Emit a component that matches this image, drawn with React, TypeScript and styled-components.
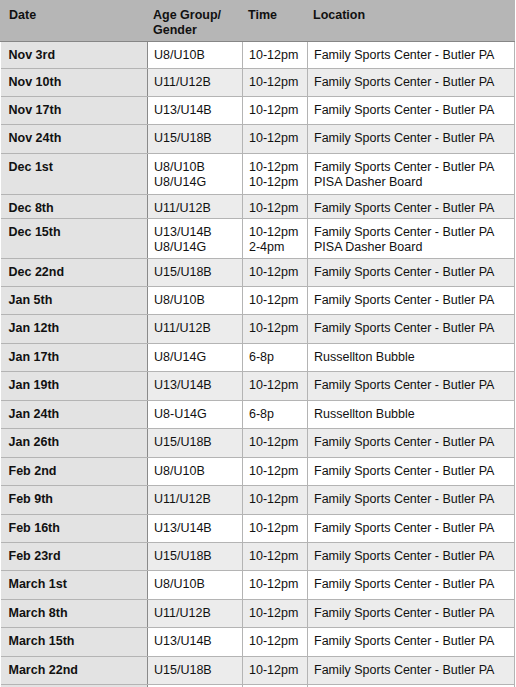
import React, { FC } from 'react';
import styled, { createGlobalStyle } from 'styled-components';

interface Game {
  date: string;
  ages: string[];
  times: string[];
  places: string[];
  height: number;
}

const FSC = 'Family Sports Center - Butler PA';

const games: Game[] = [
  { date: 'Nov 3rd', ages: ['U8/U10B'], times: ['10-12pm'], places: [FSC], height: 27 },
  { date: 'Nov 10th', ages: ['U11/U12B'], times: ['10-12pm'], places: [FSC], height: 28 },
  { date: 'Nov 17th', ages: ['U13/U14B'], times: ['10-12pm'], places: [FSC], height: 28 },
  { date: 'Nov 24th', ages: ['U15/U18B'], times: ['10-12pm'], places: [FSC], height: 29 },
  { date: 'Dec 1st', ages: ['U8/U10B', 'U8/U14G'], times: ['10-12pm', '10-12pm'], places: [FSC, 'PISA Dasher Board'], height: 41 },
  { date: 'Dec 8th', ages: ['U11/U12B'], times: ['10-12pm'], places: [FSC], height: 24 },
  { date: 'Dec 15th', ages: ['U13/U14B', 'U8/U14G'], times: ['10-12pm', '2-4pm'], places: [FSC, 'PISA Dasher Board'], height: 40 },
  { date: 'Dec 22nd', ages: ['U15/U18B'], times: ['10-12pm'], places: [FSC], height: 28 },
  { date: 'Jan 5th', ages: ['U8/U10B'], times: ['10-12pm'], places: [FSC], height: 28 },
  { date: 'Jan 12th', ages: ['U11/U12B'], times: ['10-12pm'], places: [FSC], height: 29 },
  { date: 'Jan 17th', ages: ['U8/U14G'], times: ['6-8p'], places: ['Russellton Bubble'], height: 28 },
  { date: 'Jan 19th', ages: ['U13/U14B'], times: ['10-12pm'], places: [FSC], height: 29 },
  { date: 'Jan 24th', ages: ['U8-U14G'], times: ['6-8p'], places: ['Russellton Bubble'], height: 28 },
  { date: 'Jan 26th', ages: ['U15/U18B'], times: ['10-12pm'], places: [FSC], height: 29 },
  { date: 'Feb 2nd', ages: ['U8/U10B'], times: ['10-12pm'], places: [FSC], height: 28 },
  { date: 'Feb 9th', ages: ['U11/U12B'], times: ['10-12pm'], places: [FSC], height: 29 },
  { date: 'Feb 16th', ages: ['U13/U14B'], times: ['10-12pm'], places: [FSC], height: 28 },
  { date: 'Feb 23rd', ages: ['U15/U18B'], times: ['10-12pm'], places: [FSC], height: 28 },
  { date: 'March 1st', ages: ['U8/U10B'], times: ['10-12pm'], places: [FSC], height: 29 },
  { date: 'March 8th', ages: ['U11/U12B'], times: ['10-12pm'], places: [FSC], height: 28 },
  { date: 'March 15th', ages: ['U13/U14B'], times: ['10-12pm'], places: [FSC], height: 29 },
  { date: 'March 22nd', ages: ['U15/U18B'], times: ['10-12pm'], places: [FSC], height: 28 },
  // next row is cut off at the bottom edge of the shot
  { date: '', ages: [], times: [], places: [], height: 28 },
];

const GlobalStyle = createGlobalStyle`
  body {
    margin: 0;
    background: #ffffff;
    font-family: "Liberation Sans", Arial, sans-serif;
    overflow: hidden;
  }
`;

const Sheet = styled.table`
  width: 514px;
  border-collapse: collapse;
  table-layout: fixed;
  font-size: 12.5px;
  line-height: 15px;
  color: #111;
`;

const HeadCell = styled.th<{ $w: number; $pl?: number }>`
  width: ${(p) => p.$w}px;
  height: 41px;
  box-sizing: border-box;
  padding: 8px 6px 0 ${(p) => p.$pl ?? 5}px;
  vertical-align: top;
  text-align: left;
  font-weight: bold;
  background: #b6b6b6;
  border-bottom: 1px solid #868686;
  border-left: 1px solid #b6b6b6;
`;

const Row = styled.tr<{ $h: number }>`
  height: ${(p) => p.$h}px;
`;

const DateCell = styled.td`
  padding: 6px 6px 0 8px;
  vertical-align: top;
  font-weight: bold;
  background: #e3e3e3;
  border-bottom: 1px solid #b4b4b4;
  border-right: 1px solid #8a8a8a;
  overflow: hidden;
`;

const Cell = styled.td<{ $alt: boolean }>`
  padding: 6px 4px 0 6px;
  vertical-align: top;
  white-space: nowrap;
  background: ${(p) => (p.$alt ? '#ececec' : '#ffffff')};
  border: 1px solid #b4b4b4;
  border-top: none;
  overflow: hidden;
`;

const Line = styled.div`
  display: block;
`;

const Lines: FC<{ items: string[] }> = ({ items }) => (
  <>
    {items.map((t, i) => (
      <Line key={i}>{t}</Line>
    ))}
  </>
);

const App: FC = () => (
  <>
    <GlobalStyle />
    <Sheet>
      <thead>
        <tr>
          <HeadCell $w={147} $pl={8}>Date</HeadCell>
          <HeadCell $w={95}>
            Age Group/
            <br />
            Gender
          </HeadCell>
          <HeadCell $w={65}>Time</HeadCell>
          <HeadCell $w={207}>Location</HeadCell>
        </tr>
      </thead>
      <tbody>
        {games.map((g, i) => (
          <Row key={i} $h={g.height}>
            <DateCell>{g.date}</DateCell>
            <Cell $alt={i % 2 === 1}>
              <Lines items={g.ages} />
            </Cell>
            <Cell $alt={i % 2 === 1}>
              <Lines items={g.times} />
            </Cell>
            <Cell $alt={i % 2 === 1}>
              <Lines items={g.places} />
            </Cell>
          </Row>
        ))}
      </tbody>
    </Sheet>
  </>
);

export default App;
